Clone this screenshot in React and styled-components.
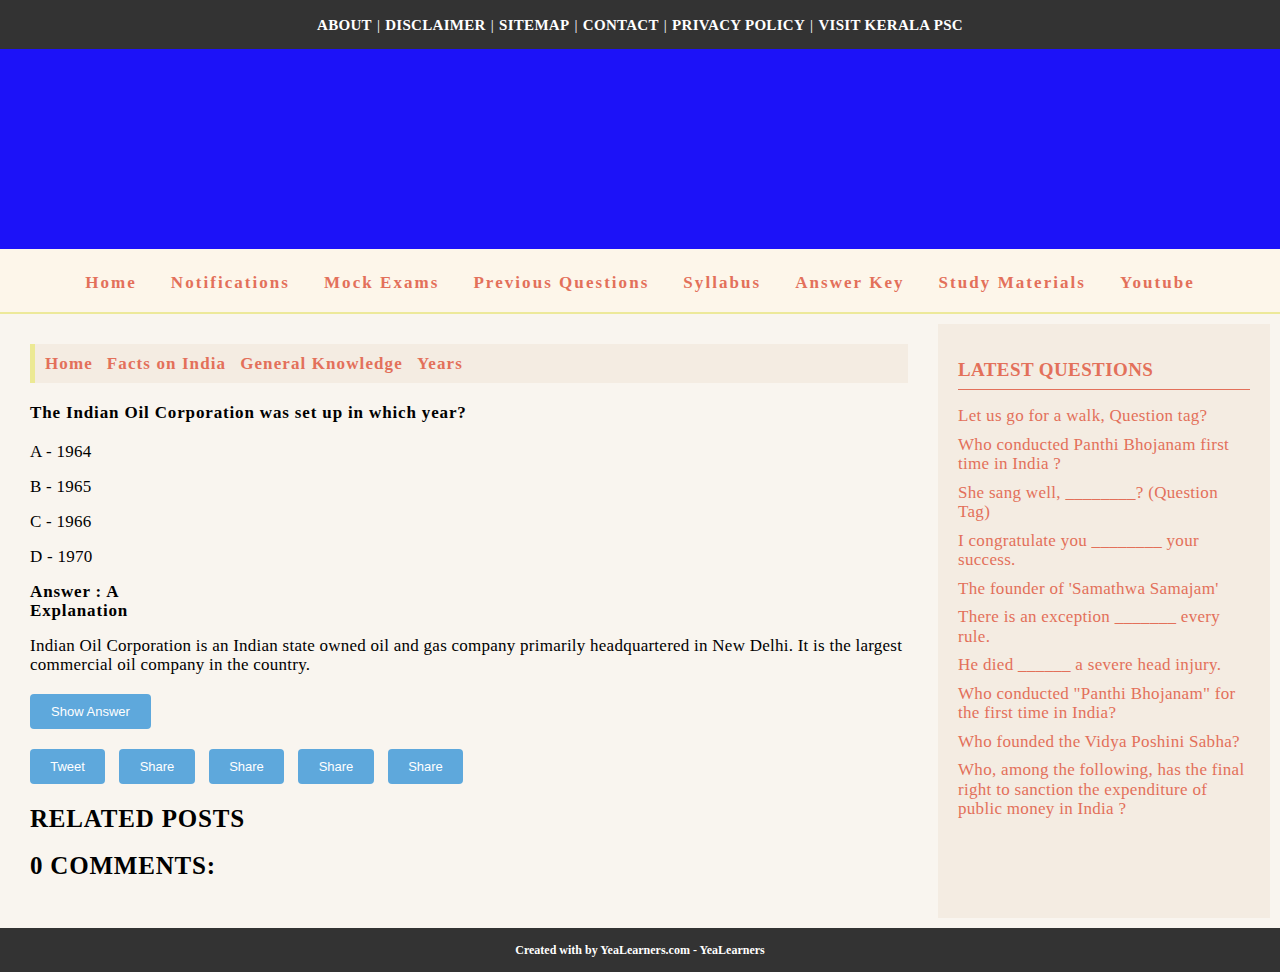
import styled, { createGlobalStyle } from 'styled-components'

const GlobalStyle = createGlobalStyle`
  html, body {
    margin: 0;
    padding: 0;
    background: #f9f5ef;
    font-family: "Liberation Serif", "DejaVu Serif", serif;
    color: #000;
  }
  * { box-sizing: border-box; }
`

const accent = '#e3705a'

const TopBar = styled.div`
  height: 49px;
  background: #333333;
  display: flex;
  align-items: center;
  justify-content: center;
  color: #fff;
  font-size: 15px;
  font-weight: bold;
  letter-spacing: 0.3px;
  padding-top: 1px;
`

const TopLink = styled.a`
  color: #fff;
  text-decoration: none;
  text-transform: uppercase;
`

const Sep = styled.span`
  margin: 0 5px;
  font-weight: normal;
`

const Banner = styled.div`
  height: 200px;
  background: #1c12f8;
`

const NavBar = styled.nav`
  height: 65px;
  background: #fdf6ea;
  border-bottom: 2px solid #ede99a;
  display: flex;
  align-items: center;
  justify-content: center;
  gap: 34px;
  padding-top: 4px;
`

const NavLink = styled.a`
  color: ${accent};
  font-weight: bold;
  font-size: 17px;
  letter-spacing: 2.05px;
  text-decoration: none;
`

const Body = styled.div`
  display: grid;
  grid-template-columns: 1fr 332px;
  gap: 30px;
  padding: 10px 10px 10px 30px;
`

const Main = styled.main`
  padding: 20px 0 0;
  width: 878px;
`

const Crumbs = styled.div`
  display: flex;
  align-items: center;
  gap: 14px;
  height: 39px;
  background: #f4ece2;
  border-left: 5px solid #ece994;
  padding-left: 10px;
`

const Crumb = styled.a`
  color: ${accent};
  font-weight: bold;
  font-size: 17px;
  letter-spacing: 1.1px;
  text-decoration: none;
`

const Question = styled.p`
  font-weight: bold;
  font-size: 17px;
  letter-spacing: 0.85px;
  margin: 20px 0 19px;
`

const Option = styled.p`
  font-size: 17px;
  letter-spacing: 0.25px;
  margin: 0 0 16px;
  line-height: 19px;
`

const Answer = styled.div`
  font-weight: bold;
  font-size: 17px;
  letter-spacing: 0.85px;
  line-height: 19px;
`

const Explanation = styled.p`
  font-size: 17px;
  letter-spacing: 0.25px;
  line-height: 19px;
  margin: 16px 0 20px;
`

const ButtonRow = styled.div`
  display: flex;
  gap: 14px;
  margin-bottom: 20px;
`

const Btn = styled.button`
  height: 35px;
  width: ${p => p.w}px;
  background: #5ea8dc;
  color: #fff;
  border: none;
  border-radius: 4px;
  font-family: "Liberation Sans", Arial, sans-serif;
  font-size: 13px;
  cursor: pointer;
`

const Heading = styled.h2`
  font-size: 25px;
  font-weight: bold;
  letter-spacing: 0.8px;
  margin: 0 0 18px;
  line-height: 29px;
`

const Sidebar = styled.aside`
  background: #f4ece2;
  padding: 35px 20px 20px;
  min-height: 594px;
`

const SideTitle = styled.h3`
  color: ${accent};
  font-size: 19px;
  font-weight: bold;
  letter-spacing: 0.4px;
  margin: 0 0 16px;
  padding-bottom: 8px;
  border-bottom: 1px solid ${accent};
`

const SideItem = styled.a`
  display: block;
  color: ${accent};
  font-size: 17px;
  letter-spacing: 0.3px;
  line-height: 19.5px;
  margin-bottom: 9px;
  text-decoration: none;
`

const Footer = styled.footer`
  height: 44px;
  background: #333333;
  color: #fff;
  display: flex;
  align-items: center;
  justify-content: center;
  font-size: 12px;
  font-weight: bold;
`

const topLinks = ['About', 'Disclaimer', 'Sitemap', 'Contact', 'Privacy Policy', 'Visit Kerala PSC']
const navLinks = ['Home', 'Notifications', 'Mock Exams', 'Previous Questions', 'Syllabus', 'Answer Key', 'Study Materials', 'Youtube']
const crumbs = ['Home', 'Facts on India', 'General Knowledge', 'Years']
const latest = [
  'Let us go for a walk, Question tag?',
  'Who conducted Panthi Bhojanam first time in India ?',
  'She sang well, ________? (Question Tag)',
  'I congratulate you ________ your success.',
  "The founder of 'Samathwa Samajam'",
  'There is an exception _______ every rule.',
  'He died ______ a severe head injury.',
  'Who conducted "Panthi Bhojanam" for the first time in India?',
  'Who founded the Vidya Poshini Sabha?',
  'Who, among the following, has the final right to sanction the expenditure of public money in India ?',
]
const shares = [['Tweet', 75], ['Share', 76], ['Share', 75], ['Share', 76], ['Share', 75]]

export default function App() {
  return (
    <>
      <GlobalStyle />
      <TopBar>
        {topLinks.map((l, i) => (
          <span key={l}>
            {i > 0 && <Sep>|</Sep>}
            <TopLink href="#">{l}</TopLink>
          </span>
        ))}
      </TopBar>
      <Banner />
      <NavBar>
        {navLinks.map(l => <NavLink key={l} href="#">{l}</NavLink>)}
      </NavBar>
      <Body>
        <Main>
          <Crumbs>
            {crumbs.map(c => <Crumb key={c} href="#">{c}</Crumb>)}
          </Crumbs>
          <Question>The Indian Oil Corporation was set up in which year?</Question>
          <Option>A - 1964</Option>
          <Option>B - 1965</Option>
          <Option>C - 1966</Option>
          <Option>D - 1970</Option>
          <Answer>Answer : A<br />Explanation</Answer>
          <Explanation>
            Indian Oil Corporation is an Indian state owned oil and gas company primarily headquartered in New Delhi. It is the largest commercial oil company in the country.
          </Explanation>
          <ButtonRow>
            <Btn w={121}>Show Answer</Btn>
          </ButtonRow>
          <ButtonRow>
            {shares.map(([t, w], i) => <Btn key={i} w={w}>{t}</Btn>)}
          </ButtonRow>
          <Heading>RELATED POSTS</Heading>
          <Heading>0 COMMENTS:</Heading>
        </Main>
        <Sidebar>
          <SideTitle>LATEST QUESTIONS</SideTitle>
          {latest.map(q => <SideItem key={q} href="#">{q}</SideItem>)}
        </Sidebar>
      </Body>
      <Footer>Created with by YeaLearners.com - YeaLearners</Footer>
    </>
  )
}
